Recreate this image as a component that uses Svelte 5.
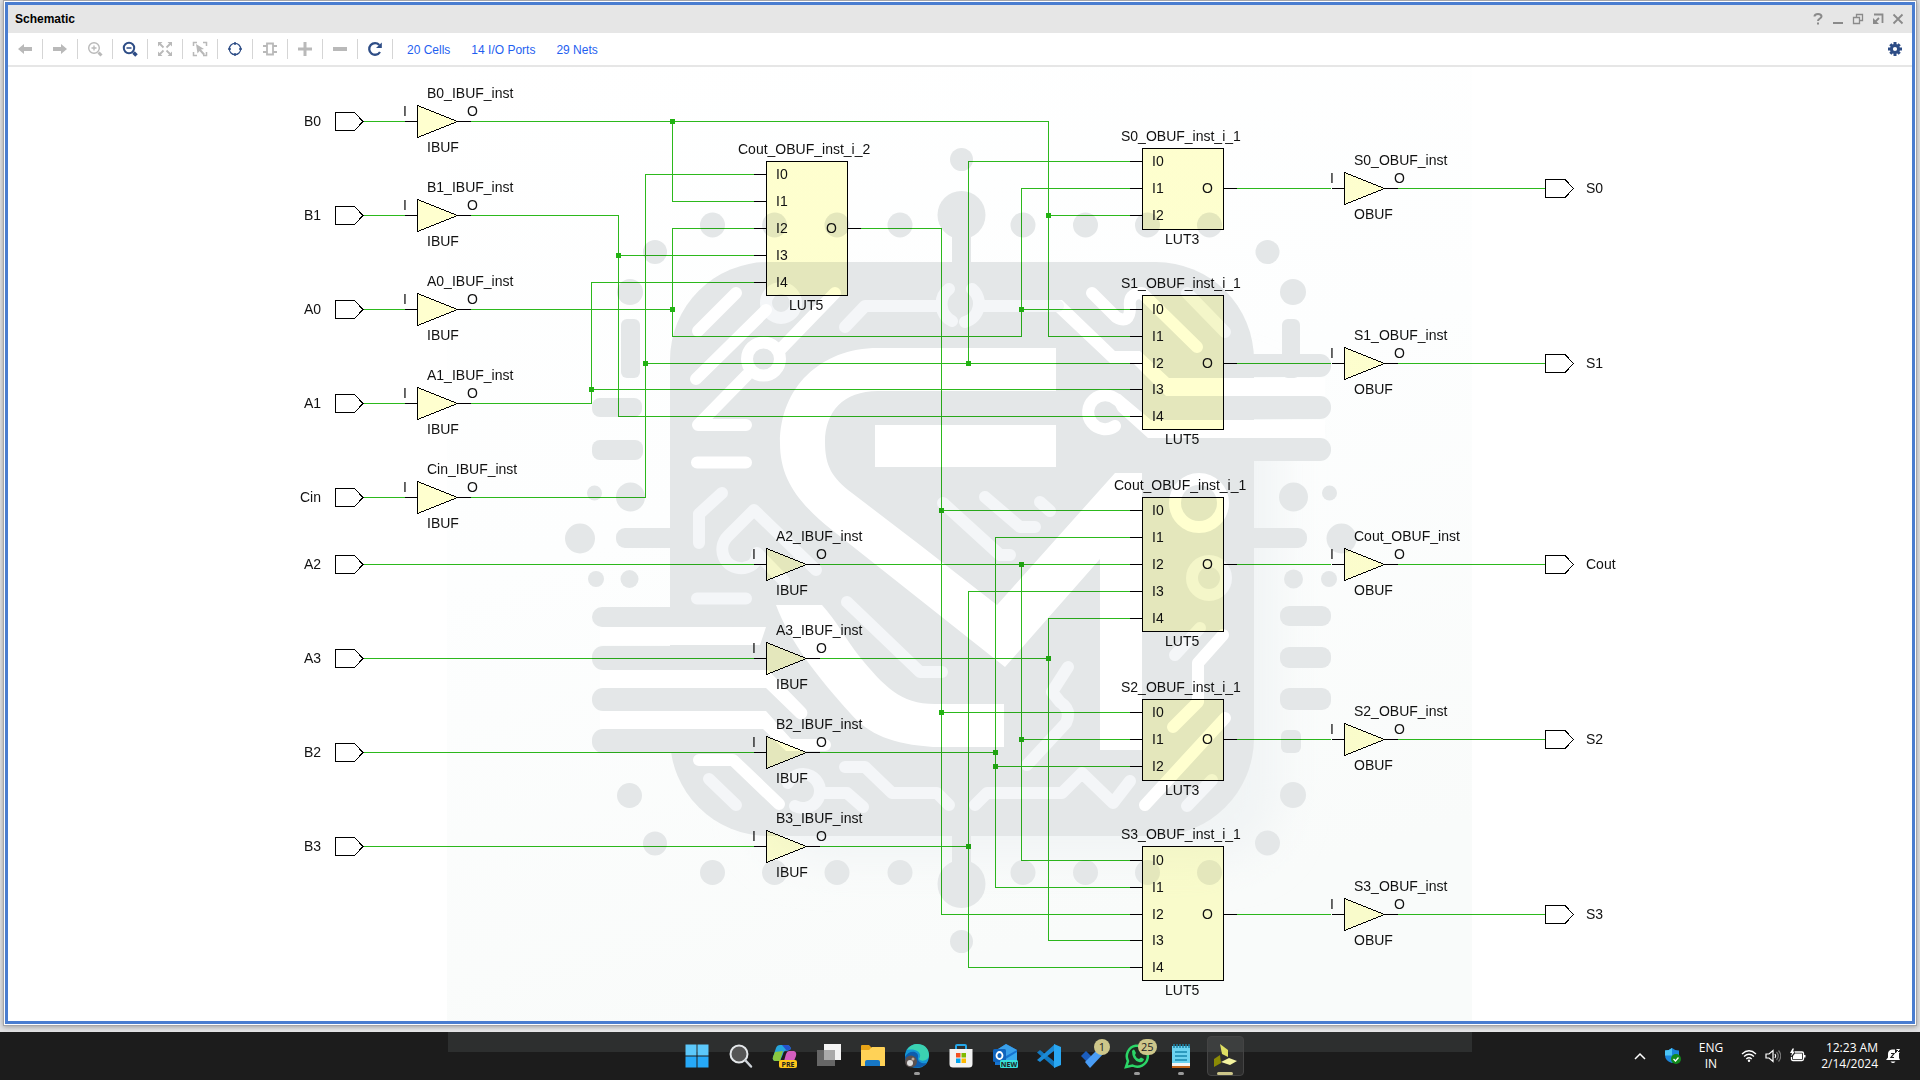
<script>
  const inBuffers = [
    { port: 'B0', x: 417.5, y: 121.5 },
    { port: 'B1', x: 417.5, y: 215.5 },
    { port: 'A0', x: 417.5, y: 309.5 },
    { port: 'A1', x: 417.5, y: 403.5 },
    { port: 'Cin', x: 417.5, y: 497.5 },
    { port: 'A2', x: 766.5, y: 564.5 },
    { port: 'A3', x: 766.5, y: 658.5 },
    { port: 'B2', x: 766.5, y: 752.5 },
    { port: 'B3', x: 766.5, y: 846.5 }
  ];
  const outBuffers = [
    { port: 'S0', x: 1344.5, y: 188.5 },
    { port: 'S1', x: 1344.5, y: 363.5 },
    { port: 'Cout', x: 1344.5, y: 564.5 },
    { port: 'S2', x: 1344.5, y: 739.5 },
    { port: 'S3', x: 1344.5, y: 914.5 }
  ];
  const buffers = [
    ...inBuffers.map((b) => ({ ...b, kind: 'IBUF' })),
    ...outBuffers.map((b) => ({ ...b, kind: 'OBUF' }))
  ];
  const luts = [
    { name: 'Cout_OBUF_inst_i_2', nx: 738, x: 766.5, top: 161.5, bottom: 295.5, out: 228.5, pins: [174.5, 201.5, 228.5, 255.5, 282.5] },
    { name: 'S0_OBUF_inst_i_1', nx: 1121, x: 1142.5, top: 148.5, bottom: 229.5, out: 188.5, pins: [161.5, 188.5, 215.5] },
    { name: 'S1_OBUF_inst_i_1', nx: 1121, x: 1142.5, top: 295.5, bottom: 429.5, out: 363.5, pins: [309.5, 336.5, 363.5, 389.5, 416.5] },
    { name: 'Cout_OBUF_inst_i_1', nx: 1114, x: 1142.5, top: 497.5, bottom: 631.5, out: 564.5, pins: [510.5, 537.5, 564.5, 591.5, 618.5] },
    { name: 'S2_OBUF_inst_i_1', nx: 1121, x: 1142.5, top: 699.5, bottom: 780.5, out: 739.5, pins: [712.5, 739.5, 766.5] },
    { name: 'S3_OBUF_inst_i_1', nx: 1121, x: 1142.5, top: 846.5, bottom: 980.5, out: 914.5, pins: [860.5, 887.5, 914.5, 940.5, 967.5] }
  ];
  const nets = [
    'M470 121.5H1048.5V336.5H1130M672.5 121.5V201.5H754M1048.5 215.5H1130',
    'M470 215.5H618.5V416.5H1130M618.5 255.5H754',
    'M470 309.5H672.5M754 228.5H672.5V336.5H1021.5V188.5H1130M1021.5 309.5H1130',
    'M470 403.5H591.5V282.5H754M591.5 389.5H1130',
    'M470 497.5H645.5V174.5H754M645.5 363.5H1130M968.5 363.5V161.5H1130',
    'M860 228.5H941.5V914.5H1130M941.5 510.5H1130M941.5 712.5H1130',
    'M819 564.5H1130M1021.5 564.5V860.5H1130M1021.5 739.5H1130',
    'M819 658.5H1048.5M1130 618.5H1048.5V940.5H1130',
    'M819 752.5H995.5M1130 537.5H995.5V887.5H1130M995.5 766.5H1130',
    'M819 846.5H968.5M1130 591.5H968.5V967.5H1130'
  ];
  const junctions = [
    [672.5, 121.5], [1048.5, 215.5], [618.5, 255.5], [672.5, 309.5], [1021.5, 309.5],
    [591.5, 389.5], [645.5, 363.5], [968.5, 363.5], [941.5, 510.5], [941.5, 712.5],
    [1021.5, 564.5], [1021.5, 739.5], [1048.5, 658.5], [995.5, 752.5], [995.5, 766.5], [968.5, 846.5]
  ];
  const dots = [
    [961.5, 159.5, 11.5], [961.5, 215, 24], [961.5, 884, 24], [961.5, 941.5, 11.5],
    ...[712.5, 774.5, 837, 900, 1023, 1085.5, 1147.5, 1209.5].flatMap((x) => [[x, 225, 12.5], [x, 872.5, 12.5]]),
    [655, 252, 12], [1267.5, 252, 12], [630, 292, 13], [1293, 292, 13],
    [594.5, 493, 7.5], [630.5, 497, 14.5], [1293.5, 497, 14.5], [1329.5, 493, 7.5],
    [580, 538.5, 15], [1341.5, 538.5, 15], [596, 579, 8], [629.5, 579, 9], [1293.5, 579, 9.5], [1329, 579, 8],
    [629.5, 795.5, 12.5], [655, 843.5, 12], [1293, 795, 13], [1267.5, 843, 12.5]
  ];
  // x, y, width, height, corner radius
  const bars = [
    [621, 319, 19, 59, 6], [1282, 319, 18, 59, 6], [592, 398, 50, 19, 8], [592, 440, 51, 20, 8],
    [616, 528, 80, 20, 9], [1220, 528, 87, 20, 9],
    [592, 607, 150, 20, 10], [592, 646, 150, 24, 11], [592, 688, 150, 23, 11], [592, 729, 150, 24, 11],
    [1200, 354, 131, 23, 11], [1200, 396, 131, 23, 11], [1200, 438, 131, 23, 11],
    [1280, 606, 51, 20, 9], [1280, 647, 51, 21, 9], [1280, 688, 51, 22, 9], [1281, 730, 20, 23, 6],
    [952, 230, 19, 40, 0], [952, 830, 19, 40, 0]
  ];
  const brightTraces =
    'M698 331L736 293M696 379L766 310M835 293L776 354M747 375L698 425H746M697 462.5H746M699 760H733L779 804M1145 805L1225 718M1173 727L1198 702V663L1223 635M1092 293L1116 317Q1130 325 1130 307Q1128 293 1142 293L1197 347';
  const softTraces =
    'M722 493L699 514V543M816 570L754 510L728 536C716 548 724 570 744 568C754 566 758 560 757 553L784 581M697 598.5H746M847 602L920 672H942M709 779L736 805M822 793H847L863 807M788 783A17 17 0 1 1 795 806M845 767H865L892 793H937L949 805M975 805L987 793H1062L1082 773L1113 803L1130 781M1027 765L1066 723Q1072 710 1060 702L1052 692L1068 667M1187 806L1212 780M1175 655L1200 628M943 503L1000 555H1010M985 497L1020 527H1035M1040 502L1050 511M845 327L865 306H940M984 306H1058M1187 293L1225 332M949 289A19 19 0 0 0 952 321M972 289A19 19 0 0 1 965 322';

  const tools = [
    { id: 'back', label: 'Previous', off: true },
    { id: 'forward', label: 'Next', off: true },
    { id: 'zoomin', label: 'Zoom in', off: true },
    { id: 'zoomout', label: 'Zoom out' },
    { id: 'fit', label: 'Zoom fit', off: true },
    { id: 'select', label: 'Select area', off: true },
    { id: 'target', label: 'Autofit selection' },
    { id: 'chip', label: 'Expand cone', off: true },
    { id: 'plus', label: 'Add', off: true },
    { id: 'minus', label: 'Remove', off: true },
    { id: 'refresh', label: 'Regenerate' }
  ];
  const apps = [
    { id: 'start', label: 'Start' },
    { id: 'search', label: 'Search' },
    { id: 'copilot', label: 'Copilot' },
    { id: 'tasks', label: 'Task view' },
    { id: 'files', label: 'File Explorer' },
    { id: 'edge', label: 'Edge', open: true },
    { id: 'store', label: 'Store' },
    { id: 'outlook', label: 'Outlook' },
    { id: 'code', label: 'Code' },
    { id: 'todo', label: 'To Do', badge: '1' },
    { id: 'chat', label: 'WhatsApp', badge: '25', open: true },
    { id: 'notes', label: 'Notepad', open: true },
    { id: 'vivado', label: 'Vivado', active: true }
  ];
</script>

<div class="desktop">
  <main class="window">
    <header class="titlebar">
      <h1>Schematic</h1>
      <div class="controls">
        <button aria-label="Help"><svg width="14" height="14" viewBox="0 0 14 14"><path d="M3.5 4.5C3.5 1 10.5 1 10.5 4.5C10.5 6.500 7 6.500 7 9M7 10.500V12.500" stroke-width="2" /></svg></button>
        <button aria-label="Minimize"><svg width="14" height="14" viewBox="0 0 14 14"><path d="M2 11H12" stroke-width="2" /></svg></button>
        <button aria-label="Restore"><svg width="14" height="14" viewBox="0 0 14 14"><path d="M2.500 5.500H8.500V11.500H2.500ZM5.500 5V2.500H11.500V8.500H9" stroke-width="1.300" /></svg></button>
        <button aria-label="Float"><svg width="14" height="14" viewBox="0 0 14 14"><path d="M3 2.500H11.500V11M8 6L4 10" stroke-width="1.800" /><path d="M2 6V12H8Z" fill="#8a8a8a" stroke="none" /></svg></button>
        <button aria-label="Close"><svg width="14" height="14" viewBox="0 0 14 14"><path d="M2.500 2.500L11.500 11.500M11.500 2.500L2.500 11.500" stroke-width="1.800" /></svg></button>
      </div>
    </header>

    <nav class="toolbar">
      {#each tools as t}
        <button class="tool" class:off={t.off} aria-label={t.label}>
          <svg width="16" height="16" viewBox="0 0 16 16">
            {#if t.id === 'back'}
              <path class="solid" d="M1 8L7 3V6H15V10H7V13Z" />
            {:else if t.id === 'forward'}
              <path class="solid" d="M15 8L9 3V6H1V10H9V13Z" />
            {:else if t.id === 'zoomin'}
              <circle cx="7" cy="7" r="5.300" stroke-width="1.400" /><path d="M7 4.500V9.500M4.500 7H9.500" stroke-width="1.300" /><path d="M11.500 11.500L14.500 14.500" stroke-width="3" />
            {:else if t.id === 'zoomout'}
              <circle cx="7" cy="7" r="5.200" stroke-width="2" /><path d="M4.500 7H9.500" stroke-width="1.500" /><path d="M11.500 11.500L14.500 14.500" stroke-width="3.500" />
            {:else if t.id === 'fit'}
              <path class="solid" d="M1 1H5.500L1 5.500ZM15 1V5.500L10.500 1ZM1 15V10.500L5.500 15ZM15 15H10.500L15 10.500Z" /><path d="M3 3L6.500 6.500M13 3L9.500 6.500M3 13L6.500 9.500M13 13L9.500 9.500" stroke-width="1.800" />
            {:else if t.id === 'select'}
              <path d="M1.500 5V1.500H5M11 1.500H14.500V5M1.500 11V14.500H5M14.500 11V14.500H11" stroke-width="1.500" /><path class="solid" d="M4 3L12 8L9 8.500L13 13L11.500 14.500L7.500 10L5.500 12.500Z" />
            {:else if t.id === 'target'}
              <circle cx="8" cy="8" r="5.700" stroke-width="1.200" /><path d="M8 1V4M8 12V15M1 8H4M12 8H15" stroke-width="1.500" />
            {:else if t.id === 'chip'}
              <path d="M5 2.500H11V13.500H5ZM1 5H5M1 11H5M11 5H15M11 11H15" stroke-width="1.800" />
            {:else if t.id === 'plus'}
              <path d="M8 1V15M1 8H15" stroke-width="3" />
            {:else if t.id === 'minus'}
              <path d="M1 8H15" stroke-width="4" />
            {:else}
              <path d="M13 11A5.800 5.800 0 1 1 12.300 4" stroke-width="2.300" /><path class="solid" d="M14.800 1.500V7H9Z" />
            {/if}
          </svg>
        </button>
      {/each}
      <div class="stats">
        <a href="#cells">20 Cells</a>
        <a href="#ports">14 I/O Ports</a>
        <a href="#nets">29 Nets</a>
      </div>
      <button class="gear" aria-label="Settings">
        <svg width="14" height="14" viewBox="0 0 14 14">
          <path d="M7 0V14M0 7H14M2.300 2.300L11.700 11.700M11.700 2.300L2.300 11.700" stroke="#2e4d86" stroke-width="3" />
          <circle cx="7" cy="7" r="3.600" fill="#fff" stroke="#2e4d86" stroke-width="3" />
        </svg>
      </button>
    </nav>

    <svg class="canvas" viewBox="8 67 1904 954" role="img" aria-label="Adder schematic">
      <defs>
        <linearGradient id="tint" x1="0" y1="0" x2="0.300" y2="1">
          <stop offset="0" stop-color="#ffffff" />
          <stop offset="0.500" stop-color="#fdfefe" />
          <stop offset="1" stop-color="#f9fbfa" />
        </linearGradient>
        <filter id="blur" x="-20%" y="-20%" width="140%" height="140%"><feGaussianBlur stdDeviation="22" /></filter>
      </defs>

      {#each nets as d}<path class="net" {d} />{/each}
      {#each buffers as b}
        {#if b.kind === 'IBUF'}
          <path class="net" d="M363 {b.y}H{b.x - 13}" />
          <path class="port" d="M335.500 {b.y - 9}H354.500L363 {b.y}L354.500 {b.y + 9}H335.500Z" />
          <text x="321" y={b.y + 4.5} text-anchor="end">{b.port}</text>
        {:else}
          <path class="net" d="M1236 {b.y}H1331M1397 {b.y}H1545" />
          <path class="port" d="M1545.500 {b.y - 9}H1565L1573.500 {b.y}L1565 {b.y + 9}H1545.500Z" />
          <text x="1586" y={b.y + 4.5}>{b.port}</text>
        {/if}
        <path class="stub" d="M{b.x - 13} {b.y}H{b.x}M{b.x + 40} {b.y}H{b.x + 53}" />
        <path class="cell" d="M{b.x} {b.y - 16}L{b.x + 40} {b.y}L{b.x} {b.y + 16}Z" />
        <text x={b.x + 9.5} y={b.y - 23.5}>{b.port}_{b.kind}_inst</text>
        <text x={b.x - 14.5} y={b.y - 5.5}>I</text>
        <text x={b.x + 49.5} y={b.y - 5.5}>O</text>
        <text x={b.x + 9.5} y={b.y + 30.5}>{b.kind}</text>
      {/each}
      {#each luts as l}
        <rect class="cell" x={l.x} y={l.top} width="81" height={l.bottom - l.top} />
        <path class="stub" d="M{l.x + 81} {l.out}H{l.x + 94}" />
        <text x={l.nx} y={l.top - 7.5}>{l.name}</text>
        <text x={l.x + 22.5} y={l.bottom + 14.5}>LUT{l.pins.length}</text>
        <text x={l.x + 59.5} y={l.out + 4.5}>O</text>
        {#each l.pins as p, i}
          <path class="stub" d="M{l.x - 12.500} {p}H{l.x}" />
          <text x={l.x + 9.5} y={p + 4.5}>I{i}</text>
        {/each}
      {/each}
      {#each junctions as [x, y]}<rect class="junction" x={x - 2.5} y={y - 2.5} width="5" height="5" />{/each}

      <g class="watermark">
        <rect x="447" y="67" width="1025" height="954" fill="url(#tint)" />
        <rect x="760" y="380" width="520" height="480" rx="60" fill="#f1f4f5" filter="url(#blur)" />
        <g class="chip">
          <rect x="670" y="262" width="584" height="574" rx="98" />
          {#each dots as [cx, cy, r]}<circle {cx} {cy} {r} />{/each}
          {#each bars as [x, y, width, height, rx]}<rect {x} {y} {width} {height} {rx} />{/each}
        </g>
        <g class="white">
          <path d="M600 627H766L760 645H600ZM600 670H768L805 708A6 6 0 0 1 797 718L766 688H600ZM600 711H766L791 739H825A6 6 0 0 1 825 751H786L763 729H600Z" />
          <path d="M1058 300L1062 300L1115 351H1140L1169 378H1325V396H1166L1133 363H1110L1056 312Z" />
          <path d="M1120 394L1151 420H1325V438H1148L1118 411L1108 392Z" />
          <path d="M1056 348V391H878C843 391 825 412 825 442C825 466 832 478 852 493L920 545L997 605L1115 473H1142V750H1100V559L1005 667L832 530C797 502 780 478 780 443C780 388 820 348 878 348Z" />
          <path d="M776 605H822C836 620 847 641 859 656C884 686 900 704 935 704H1004V747H933C893 744 869 735 850 713C820 680 789 641 776 605Z" />
          <rect x="875" y="425" width="181" height="42" />
        </g>
        <path class="trace soft" d={softTraces} />
        <circle class="trace soft" cx="781" cy="303" r="15" />
        <circle class="trace soft" cx="1209" cy="578" r="17" />
        <path class="trace" d={brightTraces} />
        <circle class="ring" cx="763.500" cy="359" r="16.500" />
        <circle class="trace" cx="1199" cy="503" r="24" />
        <path class="trace" d="M1115 426A17 17 0 1 1 1117 400" />
      </g>
    </svg>
  </main>

  <footer class="taskbar">
    <div class="apps">
      {#each apps as a}
        <button class="app" class:active={a.active} class:open={a.open} aria-label={a.label}>
          <svg width="26" height="26" viewBox="0 0 26 26">
            {#if a.id === 'start'}
              <path fill="#5cc8fb" d="M1.500 1.500H12.500V12.500H1.500ZM13.500 1.500H24.500V12.500H13.500Z" /><path fill="#26a9f8" d="M1.500 13.500H12.500V24.500H1.500ZM13.500 13.500H24.500V24.500H13.500Z" />
            {:else if a.id === 'search'}
              <circle cx="11" cy="11" r="8.500" fill="#555" stroke="#e4e7ea" stroke-width="2" /><path d="M17.500 17.500L23 23.500" stroke="#cdd2d8" stroke-width="2.500" stroke-linecap="round" />
            {:else if a.id === 'copilot'}
              <path fill="#27a6dc" d="M8 2H15Q18 2 19 6L15 8Q12 7 11 11L8 18H3Q0 17 1 14L4 5Q5 2 8 2Z" /><path fill="#88c840" d="M3 9L11 8L8 18H3Q0 17 1 14Z" /><path fill="#2552cb" d="M10 2H15Q18 2 19 6L15 8Z" /><path fill="#d45ec0" d="M17 8H22Q25 9 24 13L22 18H12L14 11Q15 8 17 8Z" /><rect x="7" y="17" width="18" height="8" rx="2" fill="#ffc61a" /><text x="16" y="24" class="tiny" text-anchor="middle">PRE</text>
            {:else if a.id === 'tasks'}
              <rect x="8" y="1" width="17" height="16" fill="#f4f4f4" /><rect x="1" y="7" width="18" height="16" fill="#666" /><path d="M8 7H19V17H8Z" fill="#aaa" />
            {:else if a.id === 'files'}
              <path fill="#e7a317" d="M1 3Q1 2 2 2H9L12 5H24V10H1Z" /><path fill="#ffd257" d="M1 7H9L12 4H24Q25 4 25 5V23H1Z" /><path fill="#1777c5" d="M5 23V19Q5 17 7 17H18Q20 17 20 19V23Z" />
            {:else if a.id === 'edge'}
              <circle cx="13" cy="13" r="12" fill="#1696d6" /><path fill="#3bd2b1" d="M3 7C9-3 25 0 25 12C25 18 17 19 15 16C19 10 12 5 3 7Z" /><path fill="#0e5cad" d="M1 14C5 6 15 8 14 14C13 19 18 21 23 20C18 27 1 27 1 14Z" /><circle cx="7" cy="18.500" r="6" fill="#5a5150" /><circle cx="6" cy="20" r="3" fill="#ddd" /><circle cx="9" cy="16" r="1.500" fill="#bba99c" />
            {:else if a.id === 'store'}
              <path d="M8 6V3Q8 2 9 2H17Q18 2 18 3V6" fill="none" stroke="#25a7e8" stroke-width="2" /><path fill="#f2f2f2" d="M1.500 6H24.500V21Q24.500 24.500 21 24.500H5Q1.500 24.500 1.500 21Z" /><path fill="#f25022" d="M8 10H12.500V14.500H8Z" /><path fill="#7fba00" d="M13.500 10H18V14.500H13.500Z" /><path fill="#00a4ef" d="M8 15.500H12.500V20H8Z" /><path fill="#ffb900" d="M13.500 15.500H18V20H13.500Z" />
            {:else if a.id === 'outlook'}
              <path fill="#1573d1" d="M3 8L14 1L25 7V22H3Z" /><path fill="#3aa0ea" d="M14 1L25 7L14 13L6 6Z" /><path fill="#38a9ee" d="M9 19L25 9V23H9Z" /><rect x="1" y="6" width="13" height="13" rx="1.500" fill="#0f64bd" /><ellipse cx="7.500" cy="12.500" rx="3" ry="3.500" fill="none" stroke="#fff" stroke-width="1.800" /><rect x="8" y="17" width="18" height="8" rx="1.500" fill="#37e0d8" /><text x="17" y="24" class="tiny" text-anchor="middle">NEW</text>
            {:else if a.id === 'code'}
              <path fill="#1178c0" d="M1 9.500L4 7L19 19V25Z" /><path fill="#1b8ad6" d="M1 17L4 19L19 7V1Z" /><path fill="#29a7f2" d="M18 1L25 4V22L18 25Z" />
            {:else if a.id === 'todo'}
              <path fill="#1b5dbe" d="M1 13L6 8L14 16L9 21Z" /><path fill="#4a9df5" d="M5 19L20 4L25 9L10 25Z" />
            {:else if a.id === 'chat'}
              <path d="M2 24L4 18A10.500 10.500 0 1 1 8.500 22.500Z" fill="#1d2b20" stroke="#2bd567" stroke-width="2.500" /><path fill="#2bd567" d="M8 8Q10 5 11 8L12 10L11 12Q12 15 15 16L17 14.500L20 16Q19 20 15 19Q8 17 8 8Z" />
            {:else if a.id === 'notes'}
              <path fill="#6dd3f0" d="M4 3H22V22H4Z" /><path d="M6 1V5M9 1V5M12 1V5M15 1V5M18 1V5M21 1V5" stroke="#1c84a8" stroke-width="1.500" /><path d="M7 9H19M7 13H19M7 17H19" stroke="#1788ad" stroke-width="1.500" /><path fill="#f4f4f4" d="M4 20H22V23H4Z" /><path fill="#c2641a" d="M4 23H22V25H4Z" />
            {:else}
              <path fill="#dfdf62" d="M8 1L16 7V14L10 11Z" /><path fill="#8b8a05" d="M8 12L2 16V24L9 20Z" /><path fill="#f5f3a0" d="M9 19L17 15L25 18L18 22Z" />
            {/if}
          </svg>
          {#if a.badge}<span class="badge">{a.badge}</span>{/if}
        </button>
      {/each}
    </div>
    <div class="tray">
      <button class="more" aria-label="Hidden icons"><svg width="14" height="10" viewBox="0 0 14 10"><path d="M2 8L7 3L12 8" fill="none" stroke="#fff" stroke-width="1.500" /></svg></button>
      <button class="shield" aria-label="Security"><svg width="18" height="18" viewBox="0 0 18 18"><path fill="#1b86dc" d="M8 1Q11 3.500 15 3.500V8Q15 14 8 16Q1 14 1 8V3.500Q5 3.500 8 1Z" /><path fill="#4cc4f5" d="M8 1V8.500H1V3.500Q5 3.500 8 1Z" /><circle cx="12" cy="12" r="5" fill="#128a1c" /><path d="M9.500 12L11.500 14L14.500 10.500" fill="none" stroke="#fff" stroke-width="1.300" /></svg></button>
      <button class="lang"><span>ENG</span><span>IN</span></button>
      <button class="status" aria-label="Network, volume, battery">
        <svg width="16" height="16" viewBox="0 0 16 16" fill="none" stroke="#fff" stroke-width="1.300"><path d="M1 6Q8-0.500 15 6M3 8.500Q8 4 13 8.500M5.300 11Q8 8.500 10.700 11" /><circle cx="8" cy="12.700" r="1.200" fill="#fff" stroke="none" /></svg>
        <svg width="16" height="16" viewBox="0 0 16 16" fill="none" stroke="#fff" stroke-width="1.200"><path d="M1 6V10H4L8 13.500V2.500L4 6ZM10 6Q11.500 8 10 10" /><path stroke="#777" d="M11.500 4Q15 8 11.500 12M13.500 2.500Q18 8 13.500 13.500" /></svg>
        <svg width="17" height="16" viewBox="0 0 17 16"><path fill="none" stroke="#fff" stroke-width="1.300" d="M6 4H13Q14.500 4 14.500 5.500V11Q14.500 12.500 13 12.500H4Q2.500 12.500 2.500 11V9" /><path fill="#fff" d="M6 5.500H13V11H4V8ZM15 7H16.500V9.500H15ZM3.500 0.500L1 5H3L2 8.500L6 3.500H4L5 0.500Z" /></svg>
      </button>
      <button class="clock"><span>12:23 AM</span><span>2/14/2024</span></button>
      <button class="bell" aria-label="Notifications"><svg width="16" height="16" viewBox="0 0 16 16"><path fill="#fff" d="M1 12L3 9.500V6Q3 2 7 1.500H10V5H14V10L15 12ZM5.500 13.500H10.500Q8 16.500 5.500 13.500Z" /><path d="M6 5.500H9L6 9.500H9" fill="none" stroke="#1c1c1c" stroke-width="1.200" /><path d="M11.500 1.500H14.500L11.500 4.500H14.500" fill="none" stroke="#fff" /></svg></button>
    </div>
  </footer>
</div>

<style>
  :global(body) {
    margin: 0;
    background: #e9e9ea;
  }
  .desktop {
    display: flex;
    flex-direction: column;
    min-height: 100vh;
    font-family: 'Liberation Sans', Arial, sans-serif;
    font-size: 12px;
    background: linear-gradient(to right, #e2e2e4, #f1f1f2 50%, #e2e2e4);
  }
  button {
    display: flex;
    align-items: center;
    justify-content: center;
    padding: 0;
    border: 0;
    background: none;
    font: inherit;
    color: inherit;
  }
  .window {
    flex: 1;
    display: flex;
    flex-direction: column;
    margin: 2px 5px 8px;
    border: 3px solid #4a7dd0;
    outline: 1px solid #fff;
    box-shadow: 0 0 0 2px #a5a5a9, 0 1px 5px 2px #9a9a9a;
    background: #fff;
  }
  .titlebar {
    display: flex;
    align-items: center;
    justify-content: space-between;
    height: 28px;
    padding: 0 4px 0 7px;
    background: #e6e6e6;
  }
  h1 {
    margin: 0;
    font-size: 12px;
    line-height: 16px;
    font-weight: 700;
    color: #000;
  }
  .controls {
    display: flex;
  }
  .controls button {
    width: 20px;
    height: 20px;
  }
  .controls svg {
    fill: none;
    stroke: #8a8a8a;
  }
  .toolbar {
    display: flex;
    align-items: center;
    height: 32px;
    border-bottom: 2px solid #e6e6e6;
  }
  .tool {
    box-sizing: border-box;
    width: 35px;
    height: 20px;
    border-right: 1px solid #d5d5d5;
    color: #2e4d86;
  }
  .tool.off {
    color: #b9b9b9;
  }
  .tool svg {
    fill: none;
    stroke: currentColor;
  }
  .tool .solid {
    fill: currentColor;
    stroke: none;
  }
  .stats {
    display: flex;
    flex: 1;
    gap: 21px;
    padding: 1px 0 0 14px;
  }
  .stats a {
    color: #1f5ff0;
    text-decoration: none;
  }
  .gear {
    width: 20px;
    height: 20px;
    margin-right: 7px;
  }
  .canvas {
    display: block;
    flex: 1;
    width: 100%;
    min-height: 0;
    isolation: isolate;
  }
  .canvas text {
    font-size: 14px;
    fill: #111;
  }
  .net,
  .stub,
  .port {
    fill: none;
    stroke: #2cb91c;
    shape-rendering: crispEdges;
  }
  .stub,
  .port {
    stroke: #000;
  }
  .cell {
    fill: #ffffcf;
    stroke: #000;
    shape-rendering: crispEdges;
  }
  .junction {
    fill: #22b312;
  }
  .watermark {
    mix-blend-mode: multiply;
    pointer-events: none;
  }
  .chip {
    fill: #e4e7e8;
  }
  .white {
    fill: #fff;
  }
  .trace {
    fill: none;
    stroke: #fff;
    stroke-width: 12px;
    stroke-linecap: round;
    stroke-linejoin: round;
  }
  .soft {
    stroke: #f4f6f8;
  }
  .ring {
    fill: #e4e7e8;
    stroke: #fff;
    stroke-width: 12px;
  }
  .taskbar {
    display: grid;
    grid-template-columns: 1fr auto 1fr;
    align-items: center;
    height: 48px;
    background: linear-gradient(#2d2f2f, #2d2f2f) center top / 1024px 20px no-repeat, #1c1c1c;
    color: #fff;
    font-family: 'Open Sans', 'Noto Sans', sans-serif;
  }
  .apps {
    grid-column: 2;
    display: flex;
    padding-left: 2px;
  }
  .app {
    position: relative;
    width: 44px;
    height: 48px;
  }
  .app.active::before {
    content: '';
    position: absolute;
    inset: 4px 3px 4px 4px;
    border: 1px solid #444;
    border-radius: 4px;
    background: #ffffff14;
  }
  .app.active svg {
    position: relative;
  }
  .app.open::after,
  .app.active::after {
    content: '';
    position: absolute;
    bottom: 5px;
    left: 19px;
    width: 6px;
    height: 3px;
    border-radius: 2px;
    background: #9a9a9a;
  }
  .app.active::after {
    left: 14px;
    width: 16px;
    background: #cdc68a;
  }
  .badge {
    position: absolute;
    top: 7px;
    left: 23px;
    box-sizing: border-box;
    min-width: 16px;
    padding: 0 3px;
    border-radius: 8px;
    background: #cdc68a;
    color: #222;
    font-size: 11px;
    line-height: 16px;
  }
  .tiny {
    font: 700 7px 'Open Sans', sans-serif;
    fill: #222;
  }
  .tray {
    display: flex;
    align-items: center;
    justify-content: flex-end;
    padding-right: 19px;
    line-height: 16px;
  }
  .shield {
    margin-left: 17px;
  }
  .lang {
    flex-direction: column;
    margin-left: 17px;
  }
  .status {
    gap: 8px;
    margin-left: 18px;
  }
  .clock {
    flex-direction: column;
    align-items: flex-end;
    margin-left: 15px;
  }
  .bell {
    margin-left: 7px;
  }
</style>
